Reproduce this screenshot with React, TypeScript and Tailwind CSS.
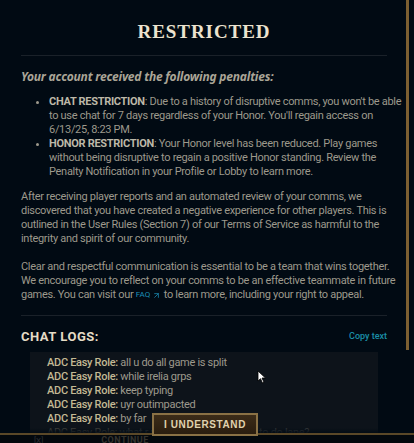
import React from "react";
import { ArrowUpRight } from "lucide-react";

const body = "font-['Roboto','Liberation_Sans',sans-serif]";
const text = "text-[11px] leading-[14px] tracking-[-0.3px]";

const chatLines = [
  "all u do all game is split",
  "while irelia grps",
  "keep typing",
  "uyr outimpacted",
  "by far",
];

// lines are broken by hand so they wrap where the client wraps them
const Lines = ({ lines }: { lines: React.ReactNode[] }) => (
  <>
    {lines.map((l, i) => (
      <span key={i} className="block whitespace-nowrap">
        {l}
      </span>
    ))}
  </>
);

const Label = ({ children }: { children: React.ReactNode }) => (
  <span className="font-bold text-[#bdb8a8]">{children}</span>
);

const ChatLine = ({ text }: { text: string }) => (
  <div className="leading-[14px]">
    <span className="text-[#c4b994] font-medium">ADC Easy Role:</span>{" "}
    <span>{text}</span>
  </div>
);

export default function App() {
  return (
    <div className={`relative w-[414px] h-[443px] overflow-hidden bg-[#010a13] text-[#9d998c] ${body}`}>
      <div className="flex flex-col pl-[21px] w-[387px]">
        {/* title */}
        <h1 className="pt-[20px] text-center text-[19px] leading-[24px] font-bold tracking-[0.05em] text-[#ece3cf] font-['Liberation_Serif',serif]">
          RESTRICTED
        </h1>
        <div className="mt-[11px] h-px bg-[#1a2129]" />

        <h2 className="mt-[13px] text-[12px] leading-[16px] font-bold italic text-[#aaa597] font-['Noto_Sans',sans-serif] tracking-[-0.2px]">
          Your account received the following penalties:
        </h2>

        <ul className={`mt-[10px] pl-[28px] list-disc ${text}`}>
          <li>
            <Lines
              lines={[
                <>
                  <Label>CHAT RESTRICTION</Label>: Due to a history of disruptive comms, you won't be able
                </>,
                "to use chat for 7 days regardless of your Honor. You'll regain access on",
                "6/13/25, 8:23 PM.",
              ]}
            />
          </li>
          <li>
            <Lines
              lines={[
                <>
                  <Label>HONOR RESTRICTION</Label>: Your Honor level has been reduced. Play games
                </>,
                "without being disruptive to regain a positive Honor standing. Review the",
                "Penalty Notification in your Profile or Lobby to learn more.",
              ]}
            />
          </li>
        </ul>

        <p className={`mt-[11px] ${text}`}>
          <Lines
            lines={[
              "After receiving player reports and an automated review of your comms, we",
              "discovered that you have created a negative experience for other players. This is",
              "outlined in the User Rules (Section 7) of our Terms of Service as harmful to the",
              "integrity and spirit of our community.",
            ]}
          />
        </p>
        <p className={`mt-[14px] ${text}`}>
          <Lines
            lines={[
              "Clear and respectful communication is essential to be a team that wins together.",
              "We encourage you to reflect on your comms to be an effective teammate in future",
              <>
                games. You can visit our{" "}
                <span className="inline-flex items-center gap-[2px] text-[8px] tracking-normal text-[#1b8fb8] align-middle">
                  FAQ <ArrowUpRight size={9} strokeWidth={2} />
                </span>{" "}
                to learn more, including your right to appeal.
              </>,
            ]}
          />
        </p>

        <div className="mt-[13px] h-px bg-[#1a2129]" />

        <div className="mt-[13px] flex items-center justify-between">
          <span className="text-[13px] leading-[16px] font-bold tracking-[0.04em] text-[#e6dcc6]">
            CHAT LOGS:
          </span>
          <span className="text-[9px] text-[#1b8fa8] font-medium">Copy text</span>
        </div>

        <div className={`mt-[7px] mx-[9px] bg-[#0d131a] pt-[4px] pl-[17px] pb-[20px] ${text}`}>
          {chatLines.map((t) => (
            <ChatLine key={t} text={t} />
          ))}
          <div className="leading-[14px] opacity-25">
            <span className="text-[#c4b994]">ADC Easy Role:</span> what r u doing while wiaph off to do lane?
          </div>
        </div>
      </div>

      {/* scrollbar */}
      <div className="absolute left-[406px] top-0 w-[3px] h-[350px] bg-[#7d5f31]" />

      {/* footer strip */}
      <div className="absolute left-0 top-[428px] w-full h-[6px] bg-gradient-to-b from-transparent to-[#010a13]" />
      <div className="absolute left-0 top-[433px] w-full h-[10px] border-t-2 border-[#5a4828] bg-[#03080d] flex items-start overflow-hidden">
        <span className="ml-[34px] mt-[1px] text-[8px] leading-[9px] text-[#2c3033]">[X]</span>
        <span className="ml-[58px] mt-[1px] text-[9px] leading-[9px] font-bold tracking-[0.05em] text-[#34332e]">
          CONTINUE
        </span>
      </div>

      {/* button */}
      <button className="absolute left-[152px] top-[413px] w-[106px] h-[23px] border-2 border-[#8a7145] bg-gradient-to-b from-[#3c2c18] to-[#2a1d0f] text-[10px] font-bold tracking-[0.06em] text-[#e0d2ae] font-['Liberation_Sans',sans-serif]">
        I UNDERSTAND
      </button>

      {/* cursor */}
      <svg className="absolute left-[257px] top-[370px]" width="10" height="14" viewBox="0 0 10 14">
        <path d="M1 1 L1 11 L3.5 8.7 L5.5 13 L7 12.3 L5 8 L8.5 8 Z" fill="#fff" stroke="#000" strokeWidth="0.8" />
      </svg>
    </div>
  );
}
